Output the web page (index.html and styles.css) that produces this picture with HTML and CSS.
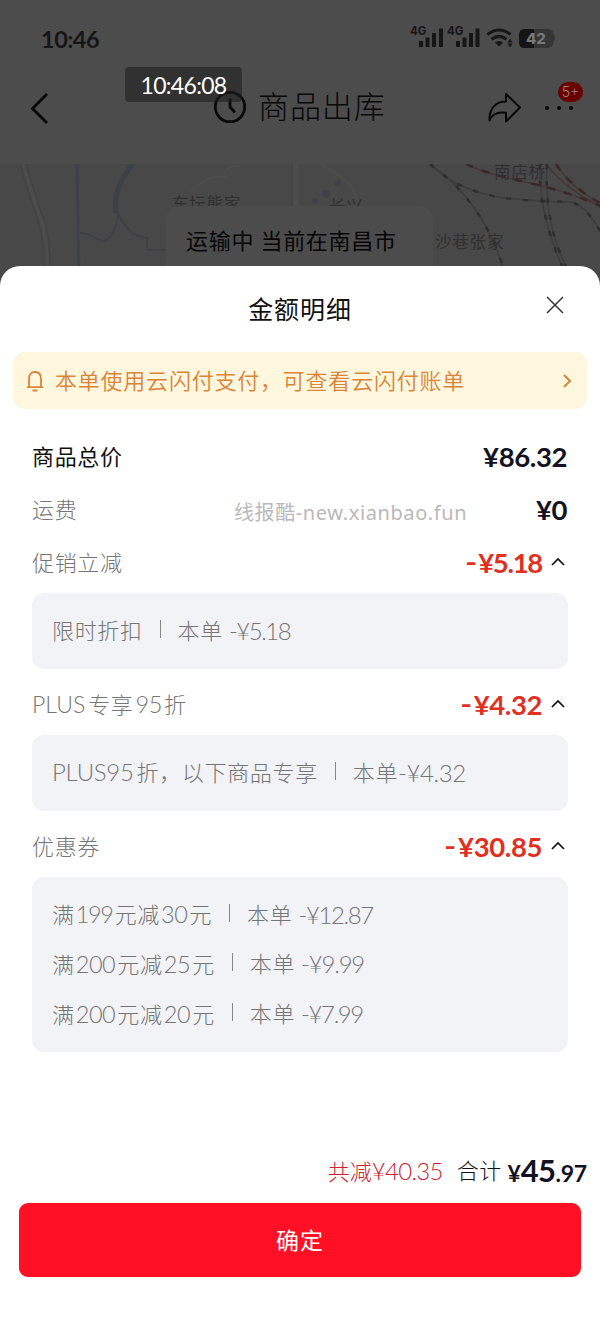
FILE: index.html
```html
<!DOCTYPE html>
<html lang="zh-CN">
<head>
<meta charset="utf-8">
<title>金额明细</title>
<link rel="stylesheet" href="styles.css">
</head>
<body>
<div class="backdrop">
  <div class="status">
    <span class="clock">10:46</span>
    <svg class="status-icons" width="148" height="28" viewBox="0 0 148 28">
      <g fill="#161616">
        <text class="net" x="0" y="11">4G</text><text class="net" x="37" y="11">4G</text>
        <path d="M9 17h4v6H9zM15.500 13.500h4V23h-4zM22 9h4v14h-4zM29 4.500h4V23h-4zM46 17h4v6h-4zM52.500 13.500h4V23h-4zM59 9h4v14h-4zM65.500 4.500h4V23h-4z"/>
        <path d="M85 18.500q4-3 8 0l-4 4zM97.500 18.500l2.500-4 2.500 4zM97.500 19.500h5l-2.500 4z"/>
      </g>
      <path d="M77.500 10.500q11.500-9 23 0M81.500 15.300q7.500-5.800 15 0" fill="none" stroke="#161616" stroke-width="3"/>
      <path d="M115 5h22q6 0 6.500 5 3 4 0 8-.5 6-6.500 6h-22q-6 0-6-6v-7q0-6 6-6z" fill="#353535"/>
      <path d="M115 5h9v19h-9q-6 0-6-6v-7q0-6 6-6z" fill="#141414"/>
      <text class="battery" x="116" y="19.500">42</text>
    </svg>
  </div>
  <div class="nav">
    <svg width="24" height="34" viewBox="0 0 24 34"><path d="M19 3L4.500 17.500 19 32" fill="none" stroke="#050505" stroke-width="2.800"/></svg>
    <div class="nav-title">
      <svg width="34" height="34" viewBox="0 0 34 34" fill="none" stroke="#090909" stroke-width="2.800"><circle cx="17" cy="16" r="14.700"/><path d="M17 7.500V16l5 5.500"/></svg>
      <span>商品出库</span>
    </div>
    <svg class="share" width="36" height="32" viewBox="0 0 36 32"><path d="M19 2l14 13.500L19 29.500v-8.800C10 19.500 5 22 2.500 28.500 2 16 9 9.500 19 9.500z" fill="none" stroke="#080808" stroke-width="2" stroke-linejoin="round"/></svg>
    <div class="more"><i></i><i></i><i></i><span class="badge">5+</span></div>
    <div class="stamp">10:46:08</div>
  </div>
  <div class="map">
    <svg width="600" height="126" viewBox="0 0 600 126">
      <g fill="none">
        <path d="M23 0Q35 40 43 62 48 85 48 126" stroke="#434343" stroke-width="7"/>
        <path d="M23 0Q35 40 43 62 48 85 48 126" stroke="#4c4c4c" stroke-width="4"/>
        <path d="M77 0L78 74 80 126" stroke="#3e4248" stroke-width="3"/>
        <path d="M133 0Q112 25 116 45 121 57 129 66 133 72 147 74V86H167M118 51C114 75 105 82 96 74Q87 69 79 69" stroke="#3f4145" stroke-width="2"/>
        <path d="M133 0Q112 25 116 49" stroke="#3d4045" stroke-width="5"/>
        <path d="M190 29Q209 10 226 13 222 2 239 2" stroke="#4c4c4c" stroke-width="2"/>
        <path d="M296 0V44" stroke="#4d4d4d" stroke-width="5"/>
        <path d="M320 0Q359 20 358 42" stroke="#4c4c4c" stroke-width="2"/>
        <path d="M292 0V42" stroke="#434343"/>
        <g stroke="#3c3c3c" stroke-width="1.500"><path d="M430 0Q491 43 509 126M430 0C470 40 530 36 570 38 585 40 596 60 602 70"/><path d="M540 0C538 50 558 95 573 126M547 0C544 53 558 95 580 126"/></g>
        <g stroke="#433838" stroke-width="1.500"><path d="M466 0C500 17 550 18 602 43M546 0Q568 28 602 42M556 0Q570 23 602 40"/></g>
        <g stroke="#2e2e2e" stroke-width="2.500" stroke-dasharray="5 12"><path d="M430 0Q491 43 509 126M430 0C470 40 530 36 570 38 585 40 596 60 602 70"/><path d="M540 0C538 50 558 95 573 126M547 0C544 53 558 95 580 126"/></g>
        <path d="M466 0C500 17 550 18 602 43M556 0Q570 23 602 40" stroke="#3a2828" stroke-width="2.500" stroke-dasharray="8 9"/>
      </g>
      <g fill="#404047"><circle cx="326" cy="30" r="4"/><circle cx="315" cy="37" r="3"/><circle cx="338" cy="19" r="3"/></g>
      <g class="places"><text x="172" y="46">东坛熊家</text><text x="329" y="49">长兴</text><text x="494" y="14">南店桥</text><text x="435" y="84">沙巷张家</text></g>
    </svg>
    <div class="transit">运输中 当前在南昌市</div>
  </div>
</div>

<main class="sheet">
  <header class="sheet-head">
    <h1>金额明细</h1>
    <svg class="close" width="20" height="20" viewBox="0 0 20 20"><path d="M2 2l16 16M18 2L2 18" stroke="#333" stroke-width="1.500"/></svg>
  </header>
  <div class="notice">
    <svg width="18" height="22" viewBox="0 0 18 22" fill="none" stroke="#d98438" stroke-width="1.800"><path d="M1 17.200h16M3 17V9q0-7 6-7t6 7v8M6.500 20.500h5"/></svg>
    <span>本单使用云闪付支付，可查看云闪付账单</span>
    <svg class="go" width="10" height="14" viewBox="0 0 10 14"><path d="M2 1l6 6-6 6" fill="none" stroke="#d98438" stroke-width="2"/></svg>
  </div>
  <section class="rows">
    <div class="row strong"><span>商品总价</span><b>¥86.32</b></div>
    <div class="row"><span>运费</span><em class="mark">线报酷-new.xianbao.fun</em><b>¥0</b></div>
    <div class="row"><span>促销立减</span><b class="off n518"><i>-</i>¥5.18</b><svg class="fold" width="14" height="9" viewBox="0 0 14 9"><path d="M1 8l6-6 6 6" fill="none" stroke="#111" stroke-width="1.700"/></svg></div>
    <div class="box"><p><span>限时折扣</span><i class="bar"></i><span>本单</span><span class="num sp n-a">-¥5.18</span></p></div>
    <div class="row"><span><span class="plus">PLUS</span>专享<span class="ninety">95</span>折</span><b class="off"><i>-</i>¥4.32</b><svg class="fold" width="14" height="9" viewBox="0 0 14 9"><path d="M1 8l6-6 6 6" fill="none" stroke="#111" stroke-width="1.700"/></svg></div>
    <div class="box"><p><span><span class="plus95">PLUS95</span>折，以下商品专享</span><i class="bar"></i><span>本单</span><span class="num n-b">-¥4.32</span></p></div>
    <div class="row"><span>优惠券</span><b class="off"><i>-</i>¥30.85</b><svg class="fold" width="14" height="9" viewBox="0 0 14 9"><path d="M1 8l6-6 6 6" fill="none" stroke="#111" stroke-width="1.700"/></svg></div>
    <div class="box coupons">
      <p><span>满<span class="q q1">199</span>元减<span class="q">30</span>元</span><i class="bar"></i><span>本单</span><span class="num sp n-c">-¥12.87</span></p>
      <p><span>满<span class="q">200</span>元减<span class="q">25</span>元</span><i class="bar"></i><span>本单</span><span class="num sp n-d">-¥9.99</span></p>
      <p><span>满<span class="q">200</span>元减<span class="q">20</span>元</span><i class="bar"></i><span>本单</span><span class="num sp n-e">-¥7.99</span></p>
    </div>
  </section>
  <footer class="foot">
    <div class="total"><span class="saved">共减<span>¥40.35</span></span><span class="sum">合计</span><b>¥<strong>45</strong>.97</b></div>
    <button class="ok">确定</button>
  </footer>
</main>
</body>
</html>
```
FILE: styles.css
```css
* { box-sizing: border-box; }
body { margin: 0; width: 600px; height: 1333px; overflow: hidden; background: #fff; font-family: Lato, "Noto Sans CJK SC", sans-serif; color: #111; }
i, em { font-style: normal; }
svg { display: block; flex: none; }
p, h1 { margin: 0; }

.backdrop { height: 290px; background: #4c4c4c; }
.status { height: 77px; display: flex; justify-content: space-between; padding: 24px 42px 0 41px; }
.clock { font-size: 23.500px; line-height: 30px; font-weight: 700; color: #161616; letter-spacing: -.5px; }
.net { font: 700 11.500px Inter, sans-serif; }
.battery { font: 800 15px Inter, sans-serif; fill: #777; }

.nav { position: relative; height: 87px; display: flex; align-items: center; padding: 0 27px 26px 28px; }
.nav-title { flex: 1; display: flex; align-items: center; gap: 11px; padding-left: 161px; font-size: 31px; font-weight: 300; letter-spacing: .9px; color: #080808; line-height: 34px; }
.nav-title span { margin-top: -3px; }
.share { margin-right: 22px; }
.more { position: relative; width: 28px; display: flex; justify-content: space-between; }
.more i { width: 4px; height: 4px; border-radius: 50%; background: #080808; }
.badge { position: absolute; left: 13px; top: -24px; width: 25px; height: 20px; border-radius: 10px; background: #690000; color: #a08080; font: 300 14px/20px Inter, sans-serif; text-align: center; }
.stamp { position: absolute; left: 125px; top: -10px; width: 117px; height: 35px; border-radius: 4px; background: rgba(30, 30, 30, .58); color: #fff; font-size: 23px; line-height: 36px; text-align: center; letter-spacing: -.7px; }

.map { position: relative; height: 126px; background: #484848; }
.places { font: 16.500px "Noto Sans CJK SC", sans-serif; fill: #303030; letter-spacing: .8px; }
.transit { position: absolute; left: 166px; top: 42px; width: 267px; height: 84px; border-radius: 14px 14px 0 0; background: #4c4c4c; color: #050505; font-size: 22px; line-height: 69px; padding-left: 20px; letter-spacing: .7px; }

.sheet { position: relative; margin-top: -24px; height: 1067px; border-radius: 20px 20px 0 0; background: #fff; display: flex; flex-direction: column; }
.sheet-head { height: 86px; display: flex; align-items: center; justify-content: center; }
.sheet-head h1 { margin-left: 72px; flex: 1; text-align: center; font-size: 25px; font-weight: 400; letter-spacing: .9px; line-height: 34px; }
.close { margin: -8px 35px 0 17px; }
.notice { margin: 0 13px; height: 57px; border-radius: 12px; background: #fef7de; color: #d98438; display: flex; align-items: center; padding: 0 15px 0 13px; font-size: 22px; letter-spacing: .78px; }
.notice span { flex: 1; margin-left: 11px; line-height: 30px; font-weight: 350; }

.rows { padding: 21.500px 32px 0; color: #757575; }
.row { height: 53.200px; display: flex; align-items: center; justify-content: space-between; font-size: 22px; line-height: 30px; font-weight: 300; letter-spacing: .65px; }
.row > span { margin-top: -1px; }
.row b { font-size: 27.500px; font-weight: 700; color: #111322; letter-spacing: -.4px; margin-right: 1px; }
.row.strong { color: #111; font-weight: 400; }
.row .off { display: flex; align-items: center; margin: 0 0 0 auto; color: #e1301f; }
.off i { margin: -3px 3px 0 0; transform: scaleX(1.150); }
.row .n518 { letter-spacing: -1.300px; }
.fold { margin: -3px 3px 0 9px; }
.mark { font: 20px "Noto Sans", "Noto Sans CJK SC", sans-serif; color: #b9b9b9; margin: 3px 0 0 88px; letter-spacing: .6px; }
.plus { letter-spacing: 0; font-size: 23px; margin-right: 3px; }
.ninety { font-size: 23.500px; letter-spacing: -.4px; margin: 0 2px; }
.plus95 { font-size: 24px; letter-spacing: -.3px; margin-right: 3px; }
.box { margin: 3px 0 10px; min-height: 75.500px; padding: 13px 20px; border-radius: 12px; background: #f2f3f7; font-size: 22px; line-height: 30px; font-weight: 300; letter-spacing: .65px; }
.box p { height: 49.700px; display: flex; align-items: center; }
.q { font-size: 23.500px; letter-spacing: -.4px; margin: 0 2px 0 1px; }
.q1 { letter-spacing: -1.300px; }
.bar { width: 1px; height: 18px; margin: -4px 17px 0 17px; background: #888; }
.num { font-size: 24px; white-space: nowrap; }
.sp { margin-left: 6px; }
.n-a { letter-spacing: -1.500px; }
.n-b { letter-spacing: -.4px; }
.n-c { letter-spacing: -1.400px; }
.n-d { letter-spacing: -1.200px; }
.n-e { letter-spacing: -1.400px; }
.coupons { margin-bottom: 0; }

.foot { margin-top: auto; height: 187px; padding: 0 19px; }
.total { height: 50px; margin: 0 -6px 7px 0; display: flex; align-items: center; justify-content: flex-end; font-size: 22px; font-weight: 300; line-height: 36px; }
.saved { color: #cf1d32; margin-right: 14px; }
.saved span { font-size: 24px; letter-spacing: -.7px; }
.sum { margin-right: 6px; letter-spacing: .4px; }
.total b { font-weight: 700; font-size: 23px; color: #111322; letter-spacing: -.2px; }
.total strong { font-size: 31px; font-weight: 700; letter-spacing: -.6px; }
.ok { display: block; width: 562px; height: 74px; border: 0; border-radius: 9px; background: #ff1024; color: #fff; font: 400 23px "Noto Sans CJK SC", sans-serif; letter-spacing: 1px; padding-bottom: 3px; }
```
